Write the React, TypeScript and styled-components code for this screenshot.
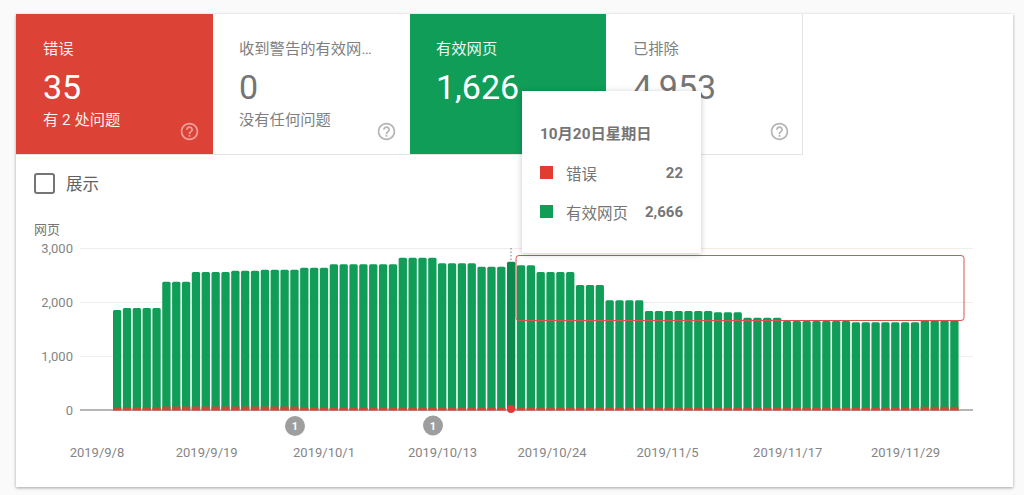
import React from "react";
import styled, { createGlobalStyle } from "styled-components";

const FONT = `Roboto, "Noto Sans CJK SC", sans-serif`;
const RED = "#dd4237";
const GREEN = "#0f9d58";

const Global = createGlobalStyle`
  html, body { margin: 0; padding: 0; background: #fafafa; }
  body { font-family: ${FONT}; width: 1024px; height: 495px; overflow: hidden; }
`;

const Page = styled.div`
  padding: 14px 11px 8px 16px;
  box-sizing: border-box;
  height: 495px;
`;

const Card = styled.div`
  position: relative;
  width: 997px;
  height: 473px;
  background: #fff;
  box-shadow: 0 1px 3px rgba(0, 0, 0, 0.35);
`;

const Tabs = styled.div`
  display: flex;
  width: 787px;
  height: 141px;
  box-sizing: border-box;
  border-bottom: 1px solid #e3e3e3;
  border-right: 1px solid #e3e3e3;
`;

const Tab = styled.div<{ $bg?: string; $on?: boolean; $w: number; $pad: number }>`
  position: relative;
  box-sizing: border-box;
  width: ${(p) => p.$w}px;
  padding: 25px 0 0 ${(p) => p.$pad}px;
  background: ${(p) => p.$bg ?? "#fff"};
  color: ${(p) => (p.$on ? "#fff" : "#757575")};
  display: flex;
  flex-direction: column;
`;

const TabTitle = styled.div`
  font-size: 15.3px;
  line-height: 20px;
  max-width: 134px;
  white-space: nowrap;
  overflow: hidden;
  text-overflow: ellipsis;
  opacity: 0.92;
`;

const TabValue = styled.div`
  font-size: 34px;
  line-height: 40px;
  margin-top: 8px;
`;

const TabNote = styled.div`
  font-size: 15.3px;
  line-height: 20px;
  margin-top: 3px;
  opacity: 0.92;
`;

const HelpIcon = styled.svg<{ $on?: boolean; $right: number }>`
  position: absolute;
  right: ${(p) => p.$right}px;
  bottom: 12px;
  width: 21px;
  height: 21px;
  fill: ${(p) => (p.$on ? "rgba(255,255,255,0.5)" : "#b5b5b5")};
`;

const ToggleRow = styled.div`
  display: flex;
  align-items: center;
  gap: 11px;
  height: 55px;
  padding: 1px 0 0 18px;
  box-sizing: border-box;
`;

const Check = styled.span`
  display: block;
  width: 21px;
  height: 21px;
  box-sizing: border-box;
  border: 2px solid #757575;
  border-radius: 3px;
`;

const ToggleLabel = styled.span`
  font-size: 16.5px;
  color: #616161;
`;

const ChartSvg = styled.svg`
  display: block;
  width: 997px;
  height: 277px;
  font-family: ${FONT};
`;

const Tooltip = styled.div`
  position: absolute;
  left: 506px;
  top: 77px;
  width: 179px;
  height: 162px;
  box-sizing: border-box;
  padding: 33px 18px 0 18px;
  background: #fff;
  box-shadow: 0 1px 6px rgba(0, 0, 0, 0.22);
  color: #757575;
  display: flex;
  flex-direction: column;
`;

const TipDate = styled.div`
  font-size: 15.3px;
  line-height: 20px;
  font-weight: 700;
  margin-bottom: 9px;
`;

const TipRow = styled.div`
  display: flex;
  align-items: center;
  height: 39px;
`;

const Swatch = styled.span<{ $c: string }>`
  width: 13px;
  height: 13px;
  background: ${(p) => p.$c};
  margin-right: 13px;
`;

const TipLabel = styled.span`
  flex: 1;
  font-size: 15.5px;
`;

const TipValue = styled.span`
  font-size: 15px;
  font-weight: 700;
`;

const HELP =
  "M11 18h2v-2h-2v2zm1-16C6.48 2 2 6.48 2 12s4.48 10 10 10 10-4.48 10-10S17.52 2 12 2zm0 18c-4.41 0-8-3.59-8-8s3.59-8 8-8 8 3.59 8 8-3.59 8-8 8zm0-14c-2.21 0-4 1.79-4 4h2c0-1.1.9-2 2-2s2 .9 2 2c0 2-3 1.75-3 5h2c0-2.25 3-2.5 3-5 0-2.21-1.79-4-4-4z";

const tabs = [
  { w: 197, pad: 27, right: 13, bg: RED, on: true, title: "错误", value: "35", note: "有 2 处问题" },
  { w: 197, pad: 26, right: 13, title: "收到警告的有效网页", value: "0", note: "没有任何问题" },
  { w: 196, pad: 26, bg: GREEN, on: true, right: 13, title: "有效网页", value: "1,626", help: false },
  { w: 196, pad: 27, right: 12, title: "已排除", value: "4,953" },
];

// [count, top y of the bar, top y of its red part]
const groups: [number, number, number][] = [
  [1, 310, 407.4], [4, 308, 407.4], [3, 281.7, 406.5], [4, 272, 406.5], [3, 270.7, 406.5],
  [4, 269.7, 406.5], [3, 267.7, 407.6], [7, 264.3, 408], [4, 257.7, 408], [4, 263.3, 408],
  [3, 266.7, 408], [1, 261.7, 408], [2, 265.3, 408], [4, 272, 408], [3, 285, 408],
  [4, 300.3, 408], [7, 311, 408], [3, 312.3, 408], [4, 317.7, 408], [7, 321, 408],
  [7, 322.3, 408], [4, 320.3, 406.8],
];

const bars = groups.flatMap(([n, top, red]) => Array.from({ length: n }, () => ({ top, red })));
const X0 = 113;
const PITCH = 9.85;
const BW = 8.3;
const BASE = 410;
const HOT = 40;

const yTicks = [
  { y: 248, t: "3,000" },
  { y: 302, t: "2,000" },
  { y: 356, t: "1,000" },
  { y: 410, t: "0" },
];

const xTicks = [
  { x: 97, t: "2019/9/8" },
  { x: 206.7, t: "2019/9/19" },
  { x: 324, t: "2019/10/1" },
  { x: 442.5, t: "2019/10/13" },
  { x: 552, t: "2019/10/24" },
  { x: 667.5, t: "2019/11/5" },
  { x: 787.7, t: "2019/11/17" },
  { x: 905.5, t: "2019/11/29" },
];

const barPath = (x: number, top: number) =>
  `M${x} ${BASE}V${top + 1.5}Q${x} ${top} ${x + 1.5} ${top}H${x + BW - 1.5}Q${x + BW} ${top} ${x + BW} ${top + 1.5}V${BASE}Z`;

function Chart() {
  return (
    <ChartSvg viewBox="16 210 997 277">
      <text x={34} y={234} fontSize={13} fill="#757575">网页</text>
      {yTicks.slice(0, 3).map((g) => (
        <line key={g.y} x1={80} x2={973} y1={g.y + 0.5} y2={g.y + 0.5} stroke="#eeeeee" />
      ))}
      {yTicks.map((g) => (
        <text key={g.t} x={73} y={g.y + 4.5} fontSize={13} textAnchor="end" fill="#858585">{g.t}</text>
      ))}
      <line x1={80} x2={973} y1={410} y2={410} stroke="#9e9e9e" strokeWidth={1.4} />
      {bars.map((b, i) => {
        const x = X0 + i * PITCH;
        return (
          <g key={i}>
            <path d={barPath(x, b.top)} fill={i === HOT ? "#0c8a4d" : GREEN} />
            <rect x={x} y={b.red} width={BW} height={BASE + 0.6 - b.red} fill="#d2463a" />
          </g>
        );
      })}
      <line x1={511} x2={511} y1={248} y2={262} stroke="#757575" strokeDasharray="1.5 2" />
      <circle cx={511} cy={409} r={4} fill="#e53935" />
      <rect x={516} y={255.5} width={448} height={65} rx={3} fill="none" stroke="#d9534f" strokeWidth={1} />
      {[{ x: 295, y: 426 }, { x: 433, y: 425.5 }].map((a) => (
        <g key={a.x}>
          <circle cx={a.x} cy={a.y} r={10} fill="#9e9e9e" />
          <text x={a.x} y={a.y + 4} fontSize={11} fontWeight={700} textAnchor="middle" fill="#fff">1</text>
        </g>
      ))}
      {xTicks.map((t) => (
        <text key={t.t} x={t.x} y={456.5} fontSize={13} textAnchor="middle" fill="#858585">{t.t}</text>
      ))}
    </ChartSvg>
  );
}

export default function App() {
  return (
    <>
      <Global />
      <Page>
        <Card>
          <Tabs>
            {tabs.map((t) => (
              <Tab key={t.title} $bg={t.bg} $on={t.on} $w={t.w} $pad={t.pad}>
                <TabTitle>{t.title}</TabTitle>
                <TabValue>{t.value}</TabValue>
                {t.note && <TabNote>{t.note}</TabNote>}
                {t.help !== false && (
                  <HelpIcon viewBox="0 0 24 24" $on={t.on} $right={t.right}>
                    <path d={HELP} />
                  </HelpIcon>
                )}
              </Tab>
            ))}
          </Tabs>
          <ToggleRow>
            <Check />
            <ToggleLabel>展示</ToggleLabel>
          </ToggleRow>
          <Chart />
          <Tooltip>
            <TipDate>10月20日星期日</TipDate>
            <TipRow>
              <Swatch $c="#e03c31" />
              <TipLabel>错误</TipLabel>
              <TipValue>22</TipValue>
            </TipRow>
            <TipRow>
              <Swatch $c={GREEN} />
              <TipLabel>有效网页</TipLabel>
              <TipValue>2,666</TipValue>
            </TipRow>
          </Tooltip>
        </Card>
      </Page>
    </>
  );
}
